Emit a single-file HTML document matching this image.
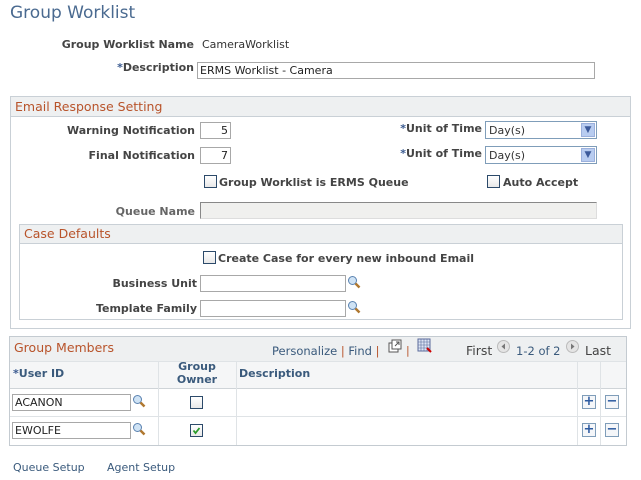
<!DOCTYPE html>
<html><head><meta charset="utf-8"><style>
*{box-sizing:border-box;margin:0;padding:0}
body{width:641px;height:480px;background:#fff;position:relative;overflow:hidden;font-family:"DejaVu Sans",Verdana,sans-serif;font-size:11px;color:#333}
.a{position:absolute;white-space:nowrap}
.l{font-weight:bold;color:#444;text-align:right}
.s{color:#3a5a7c}
.inp{position:absolute;border:1px solid #a8a8a8;background:#fff;height:17px;font-size:11px;padding:1px 2px;color:#222}
.box{position:absolute;border:1px solid #c9d0d6}
.hd{position:absolute;left:0;right:0;top:0;background:#eef0f1;border-bottom:1px solid #c9d0d6;color:#b8532a;font-size:12.5px;padding:2px 4px}
.cb{position:absolute;width:13px;height:13px;border:1px solid #2c4a6a;background:linear-gradient(#fff,#e8e8e8)}
.sel{position:absolute;border:1px solid #7f9db9;background:#fff;height:18px;font-size:11px;padding:2px 3px}
.sel i{position:absolute;right:1px;top:1px;width:14px;height:14px;background:#b8ccf0;border:1px solid #9bb0dc;color:#3c5a9a;font-style:normal;font-size:9px;text-align:center;line-height:13px}
.mag{position:absolute;width:14px;height:14px}
.btn{position:absolute;width:14px;height:14px;border:1px solid #7f9db9;background:#f4f6f9;color:#2c5aa0;font-weight:bold;text-align:center;line-height:12px;font-size:13px}
.vl{position:absolute;width:1px;background:#dfe3e6}
.hl{position:absolute;height:1px;background:#dfe3e6}
</style></head><body>
<div class="a" style="left:10px;top:3px;font-size:17px;color:#4a6a90">Group Worklist</div>
<div class="a l" style="right:447px;top:38px">Group Worklist Name</div>
<div class="a" style="left:202px;top:38px">CameraWorklist</div>
<div class="a l" style="right:447px;top:61px"><span style="color:#3a5a90">*</span>Description</div>
<div class="inp" style="left:197px;top:62px;width:398px">ERMS Worklist - Camera</div>

<div class="box" style="left:10px;top:96px;width:621px;height:233px"><div class="hd" style="height:20px">Email Response Setting</div></div>
<div class="a l" style="right:446px;top:124px">Warning Notification</div>
<div class="inp" style="left:200px;top:122px;width:31px;text-align:right">5</div>
<div class="a l" style="right:159px;top:122px"><span style="color:#3a5a90">*</span>Unit of Time</div>
<div class="sel" style="left:485px;top:121px;width:112px">Day(s)<i>▼</i></div>
<div class="a l" style="right:446px;top:149px">Final Notification</div>
<div class="inp" style="left:200px;top:147px;width:31px;text-align:right">7</div>
<div class="a l" style="right:159px;top:147px"><span style="color:#3a5a90">*</span>Unit of Time</div>
<div class="sel" style="left:485px;top:146px;width:112px">Day(s)<i>▼</i></div>
<div class="cb" style="left:204px;top:175px"></div>
<div class="a l" style="left:219px;top:176px">Group Worklist is ERMS Queue</div>
<div class="cb" style="left:487px;top:175px"></div>
<div class="a l" style="left:503px;top:176px">Auto Accept</div>
<div class="a l" style="right:446px;top:205px;color:#666">Queue Name</div>
<div class="inp" style="left:200px;top:202px;width:397px;background:#f0f0ee;border-color:#888 #ddd #ddd #888"></div>

<div class="box" style="left:19px;top:224px;width:604px;height:96px"><div class="hd" style="height:19px;padding-top:1px">Case Defaults</div></div>
<div class="cb" style="left:203px;top:251px"></div>
<div class="a l" style="left:218px;top:252px">Create Case for every new inbound Email</div>
<div class="a l" style="right:444px;top:277px">Business Unit</div>
<div class="inp" style="left:200px;top:275px;width:146px"></div>
<svg class="mag" style="left:347px;top:275px" viewBox="0 0 14 14"><circle cx="5.5" cy="5.5" r="4" fill="#cfe3f5" stroke="#5a82b0"/><path d="M8.5 8.5l4 4" stroke="#b07830" stroke-width="2.5"/></svg>
<div class="a l" style="right:444px;top:302px">Template Family</div>
<div class="inp" style="left:200px;top:300px;width:146px"></div>
<svg class="mag" style="left:347px;top:300px" viewBox="0 0 14 14"><circle cx="5.5" cy="5.5" r="4" fill="#cfe3f5" stroke="#5a82b0"/><path d="M8.5 8.5l4 4" stroke="#b07830" stroke-width="2.5"/></svg>

<div class="box" style="left:9px;top:336px;width:618px;height:110px;border-color:#c4cbd1"><div class="hd" style="height:25px;padding-top:3px;border-bottom:none">Group Members</div></div>
<div class="a s" style="left:272px;top:344px;font-size:11.5px">Personalize <span style="color:#b8532a">|</span> Find <span style="color:#b8532a">|</span></div>
<svg class="a" style="left:388px;top:339px" width="14" height="14" viewBox="0 0 14 14"><rect x="1" y="4" width="9" height="9" fill="#fff" stroke="#555"/><rect x="4" y="1" width="9" height="9" fill="#fff" stroke="#555"/><path d="M7 7l4-4M8 3h3v3" stroke="#555" fill="none"/></svg>
<div class="a" style="left:406px;top:344px;color:#b8532a">|</div>
<svg class="a" style="left:417px;top:338px" width="16" height="16" viewBox="0 0 16 16"><rect x="1" y="1" width="12" height="12" fill="#dde6f5" stroke="#5a6a9a"/><path d="M1 4h12M1 7h12M1 10h12M4 1v12M7 1v12M10 1v12" stroke="#5a6a9a" stroke-width=".6"/><path d="M10 10l4 4" stroke="#c00" stroke-width="2"/></svg>
<div class="a" style="left:466px;top:343px;font-size:12.5px;color:#444">First</div>
<svg class="a" style="left:497px;top:340px" width="13" height="13"><circle cx="6.5" cy="6.5" r="6" fill="#e4e4e4" stroke="#bbb"/><path d="M8 3.5L4.5 6.5 8 9.5z" fill="#777"/></svg>
<div class="a s" style="left:516px;top:344px;font-size:11.5px">1-2 of 2</div>
<svg class="a" style="left:566px;top:340px" width="13" height="13"><circle cx="6.5" cy="6.5" r="6" fill="#e4e4e4" stroke="#bbb"/><path d="M5 3.5L8.5 6.5 5 9.5z" fill="#777"/></svg>
<div class="a" style="left:585px;top:343px;font-size:12.5px;color:#444">Last</div>

<div style="position:absolute;left:10px;top:361px;width:616px;height:27px;background:#f5f6f7"></div>
<div class="hl" style="left:10px;top:361px;width:616px"></div>
<div class="hl" style="left:10px;top:388px;width:616px;background:#cfd4d8"></div>
<div class="hl" style="left:10px;top:416px;width:616px"></div>
<div class="vl" style="left:158px;top:361px;height:84px"></div>
<div class="vl" style="left:236px;top:361px;height:84px"></div>
<div class="vl" style="left:577px;top:361px;height:84px"></div>
<div class="vl" style="left:600px;top:361px;height:84px"></div>
<div class="a l" style="left:13px;top:367px;color:#3a5a7c"><span style="color:#3a5a90">*</span>User ID</div>
<div class="a l" style="left:158px;width:78px;top:360px;text-align:center;color:#3a5a7c;line-height:13px">Group<br>Owner</div>
<div class="a l" style="left:239px;top:367px;color:#3a5a7c">Description</div>

<div class="inp" style="left:12px;top:394px;width:119px">ACANON</div>
<svg class="mag" style="left:132px;top:394px" viewBox="0 0 14 14"><circle cx="5.5" cy="5.5" r="4" fill="#cfe3f5" stroke="#5a82b0"/><path d="M8.5 8.5l4 4" stroke="#b07830" stroke-width="2.5"/></svg>
<div class="cb" style="left:190px;top:396px"></div>
<div class="btn" style="left:582px;top:395px">+</div><div class="btn" style="left:605px;top:395px">−</div>
<div class="inp" style="left:12px;top:422px;width:119px">EWOLFE</div>
<svg class="mag" style="left:132px;top:422px" viewBox="0 0 14 14"><circle cx="5.5" cy="5.5" r="4" fill="#cfe3f5" stroke="#5a82b0"/><path d="M8.5 8.5l4 4" stroke="#b07830" stroke-width="2.5"/></svg>
<div class="cb" style="left:190px;top:424px"><svg width="11" height="11" style="position:absolute;left:0;top:0"><path d="M2.5 5.5l2 2.5 4-5" stroke="#2a9a2a" stroke-width="1.8" fill="none"/></svg></div>
<div class="btn" style="left:582px;top:423px">+</div><div class="btn" style="left:605px;top:423px">−</div>

<div class="a s" style="left:13px;top:461px">Queue Setup</div>
<div class="a s" style="left:107px;top:461px">Agent Setup</div>
</body></html>
